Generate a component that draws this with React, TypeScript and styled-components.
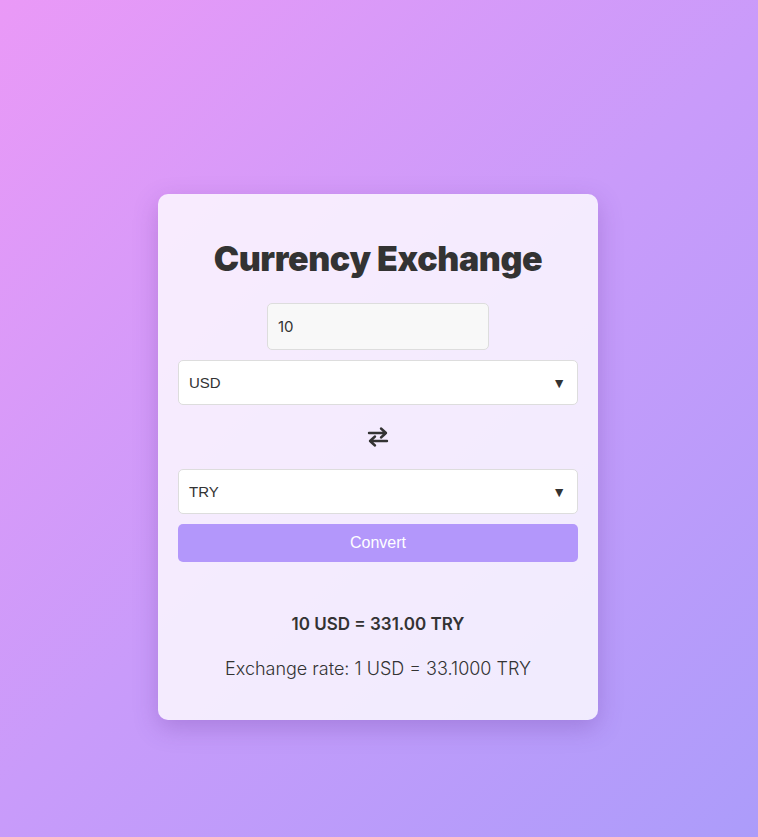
import React, { useState } from "react";
import styled, { createGlobalStyle } from "styled-components";

const Global = createGlobalStyle`
  html, body { margin: 0; padding: 0; }
  body {
    min-height: 837px;
    font-family: "Inter", "Noto Sans", sans-serif;
    background: linear-gradient(135deg, #ea99f7 0%, #c99bfa 50%, #ac9cfa 100%);
  }
`;

const Page = styled.div`
  min-height: 837px;
  display: flex;
  justify-content: center;
  align-items: flex-start;
  padding-top: 194px;
  padding-right: 2px;
  box-sizing: border-box;
`;

const Card = styled.div`
  width: 440px;
  height: 526px;
  box-sizing: border-box;
  padding: 40px 20px 20px;
  border-radius: 10px;
  background: rgba(255, 255, 255, 0.8);
  box-shadow: 0 8px 24px rgba(90, 40, 140, 0.25);
  display: flex;
  flex-direction: column;
  align-items: center;
`;

const Title = styled.h1`
  margin: 0 0 19px;
  font-family: "Inter", sans-serif;
  font-weight: 900;
  font-size: 34px;
  line-height: 50px;
  letter-spacing: -0.4px;
  color: #333;
`;

const AmountInput = styled.input`
  width: 222px;
  height: 47px;
  box-sizing: border-box;
  padding: 0 10px;
  border: 1px solid #ddd;
  border-radius: 5px;
  background: #f8f8f8;
  font-family: "Inter", sans-serif;
  font-size: 15px;
  color: #333;
  margin-bottom: 10px;
  outline: none;
`;

const SelectWrap = styled.div`
  position: relative;
  width: 400px;
  height: 45px;
  box-sizing: border-box;
  border: 1px solid #ddd;
  border-radius: 5px;
  background: #fff;
  display: flex;
  align-items: center;
  padding: 0 10px;
  font-family: "Liberation Sans", Arial, sans-serif;
  font-size: 15px;
  color: #333;
`;

const Arrow = styled.span`
  margin-left: auto;
  font-size: 14px;
  color: #333;
  margin-right: 1px;
`;

const SwapRow = styled.div`
  height: 64px;
  display: flex;
  align-items: center;
  justify-content: center;
  color: #333;
`;

const Button = styled.button`
  margin-top: 10px;
  width: 400px;
  height: 38px;
  border: none;
  border-radius: 5px;
  background: #b397fb;
  color: #fff;
  font-family: "Liberation Sans", Arial, sans-serif;
  font-size: 16px;
  cursor: pointer;
`;

const Result = styled.div`
  margin-top: 52px;
  font-family: "Inter", sans-serif;
  font-weight: 600;
  font-size: 17px;
  color: #333;
`;

const Rate = styled.div`
  margin-top: 24px;
  font-family: "Inter", sans-serif;
  font-weight: 300;
  font-size: 18px;
  color: #333;
`;

function Select({ value }: { value: string }) {
  return (
    <SelectWrap>
      {value}
      <Arrow>▼</Arrow>
    </SelectWrap>
  );
}

export default function App() {
  const [amount, setAmount] = useState("10");
  return (
    <>
      <Global />
      <Page>
        <Card>
          <Title>Currency Exchange</Title>
          <AmountInput value={amount} onChange={(e) => setAmount(e.target.value)} />
          <Select value="USD" />
          <SwapRow>
            <svg width="24" height="24" viewBox="0 0 24 24" fill="none" stroke="#333" strokeWidth="2.4" strokeLinecap="round" strokeLinejoin="round">
              <path d="M3 8h17M15 3.5l5 4.5-5 4.5" />
              <path d="M21 16H4M9 11.5L4 16l5 4.5" />
            </svg>
          </SwapRow>
          <Select value="TRY" />
          <Button>Convert</Button>
          <Result>10 USD = 331.00 TRY</Result>
          <Rate>Exchange rate: 1 USD = 33.1000 TRY</Rate>
        </Card>
      </Page>
    </>
  );
}
